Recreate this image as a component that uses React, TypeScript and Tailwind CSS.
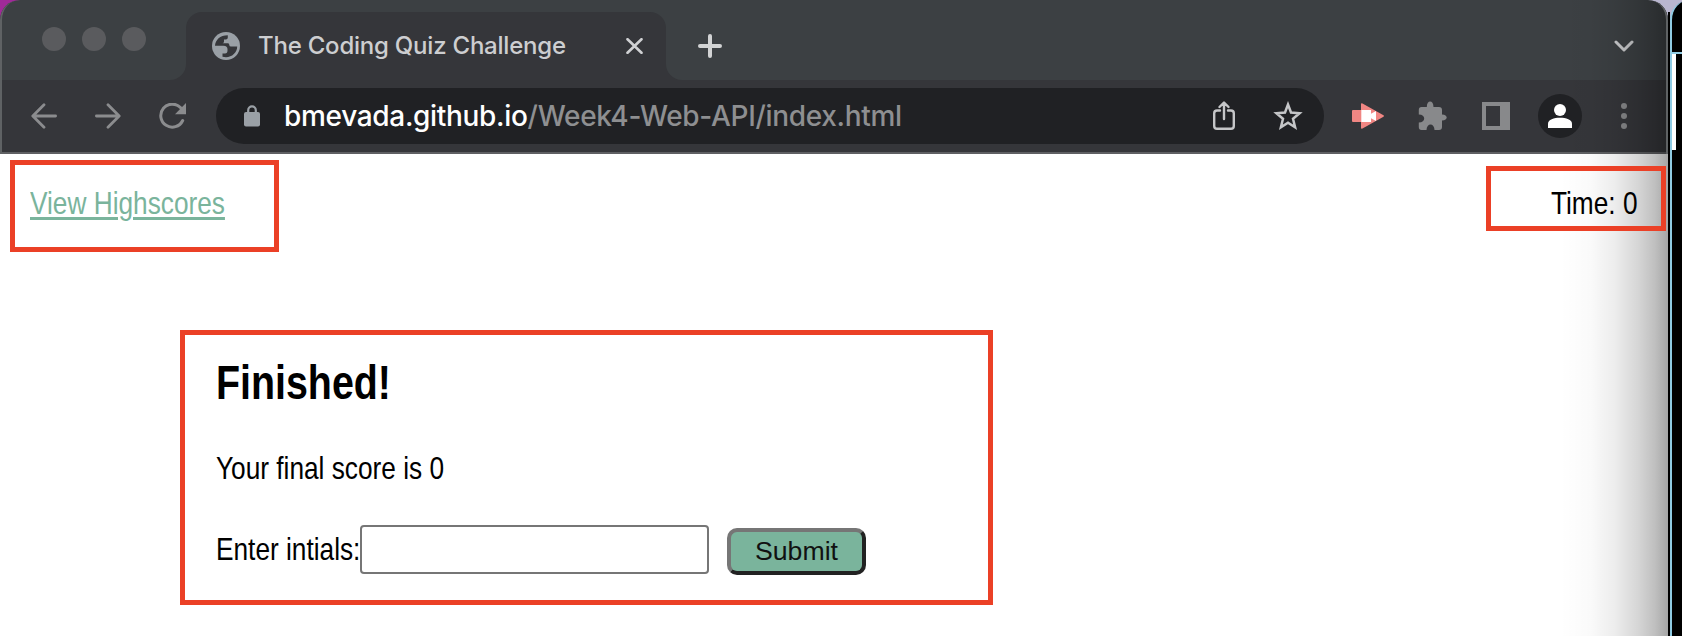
import type { ReactNode } from "react";

function Tick({ children, className = "" }: { children: ReactNode; className?: string }) {
  return <span className={"block shrink-0 whitespace-nowrap " + className}>{children}</span>;
}

function Corner({ flip = false }: { flip?: boolean }) {
  return (
    <svg className="block h-4 w-4 shrink-0 self-end" viewBox="0 0 16 16">
      <path d={flip ? "M0 0A16 16 0 0 0 16 16H0Z" : "M16 0A16 16 0 0 1 0 16H16Z"} fill="#35363a" />
    </svg>
  );
}

function TabStrip() {
  return (
    <div className="flex h-20 bg-[#3c4043] pl-0.5">
      <div className="flex w-[168px] shrink-0 gap-4 pt-[27px] pl-[40px]">
        <i className="h-6 w-6 rounded-full bg-[#5a5b5e]" />
        <i className="h-6 w-6 rounded-full bg-[#5a5b5e]" />
        <i className="h-6 w-6 rounded-full bg-[#5a5b5e]" />
      </div>
      <Corner />
      <div className="mt-3 flex h-[68px] w-[480px] shrink-0 items-start rounded-t-[16px] bg-[#35363a]">
        <svg className="mt-5 ml-[26px] h-7 w-7 shrink-0" viewBox="0 0 28 28">
          <circle cx="14" cy="14" r="14" fill="#9aa0a6" />
          <path
            d="M3 13.800C3.300 8 8 3.300 15.800 3.300V5.500Q15.800 7.500 13.800 7.500H12V9.500Q12 11 10.500 11.300H16Q17.300 11.300 17.300 13Q17.300 14.500 19 14.500H25.200C25.200 20.500 20 25.200 14 25.200L10.500 24.700V21.500H13Q15.500 21.500 15.500 18.500V17.300Q15.500 14 11.500 13.800Z"
            fill="#35363a"
          />
        </svg>
        <Tick className="mt-[18px] ml-[18px] w-[310px] font-[Inter,sans-serif] text-[24px] leading-[32px] font-[450] tracking-[-0.22px] text-[#cdced0]">
          The Coding Quiz Challenge
        </Tick>
        <svg className="mt-[26px] ml-[58px] h-4 w-[17px] shrink-0" viewBox="0 0 17 16" fill="none" stroke="#d0d1d3" strokeWidth="2.6" strokeLinecap="round">
          <path d="M1.500 1.200L15.500 14.800M15.500 1.200L1.500 14.800" />
        </svg>
      </div>
      <Corner flip />
      <svg className="mt-[34px] ml-4 h-6 w-6 shrink-0" viewBox="0 0 24 24" fill="none" stroke="#d2d3d4" strokeWidth="4" strokeLinecap="round">
        <path d="M12 2V22M2 12H22" />
      </svg>
      <svg className="mt-[40px] mr-[34px] ml-auto h-3 w-[20px]" viewBox="0 0 20 12" fill="none" stroke="#cbccce" strokeWidth="3" strokeLinecap="round" strokeLinejoin="round">
        <path d="M2 2L10 10L18 2" />
      </svg>
    </div>
  );
}

function Toolbar() {
  return (
    <div className="flex h-[74px] items-center border-b-2 border-[#5f6063] bg-[#35363a] pl-0.5">
      <svg className="ml-[29px] h-[26px] w-[26px] shrink-0" viewBox="0 0 26 26" fill="none" stroke="#8b8c8e" strokeWidth="2.800" strokeLinecap="round" strokeLinejoin="round">
        <path d="M24.600 13H2M13 1.800L1.800 13L13 24.200" />
      </svg>
      <svg className="ml-[38px] h-[26px] w-[26px] shrink-0" viewBox="0 0 26 26" fill="none" stroke="#8b8c8e" strokeWidth="2.800" strokeLinecap="round" strokeLinejoin="round">
        <path d="M1.400 13H24M13 1.800L24.200 13L13 24.200" />
      </svg>
      <svg className="ml-[38px] h-[26px] w-[27px] shrink-0" viewBox="0 0 27 26">
        <path d="M21.700 4.800A11.500 11.500 0 1 0 23.700 17.500" fill="none" stroke="#8b8c8e" strokeWidth="3" strokeLinecap="round" />
        <path d="M27 0V11.300H16Z" fill="#8b8c8e" />
      </svg>
      <div className="ml-[30px] flex h-14 w-[1108px] shrink-0 items-center rounded-full bg-[#202124]">
        <svg className="ml-[28px] h-[22px] w-4 shrink-0" viewBox="0 0 16 22">
          <path d="M4.200 8V5.200A3.800 3.800 0 0 1 11.800 5.200V8" fill="none" stroke="#9aa0a6" strokeWidth="2.200" />
          <rect y="7" width="16" height="14.500" rx="2" fill="#9aa0a6" />
        </svg>
        <Tick className="ml-[24px] font-[Inter,sans-serif] text-[28px] leading-[36px] font-[450] tracking-[-0.32px] text-[#8e8f91]">
          <span className="text-white">bmevada.github.io</span>/Week4-Web-API/index.html
        </Tick>
        <svg className="ml-auto h-[30px] w-[22px]" viewBox="0 0 22 30" fill="none" stroke="#c5c6c8" strokeWidth="2.400" strokeLinecap="round" strokeLinejoin="round">
          <path d="M7 9.500H4Q1.200 9.500 1.200 12.300V25Q1.200 27.800 4 27.800H18Q20.800 27.800 20.800 25V12.300Q20.800 9.500 18 9.500H15M11 18V2M6.500 6L11 1.500L15.500 6" />
        </svg>
        <svg className="mr-[21px] ml-[38px] h-[30px] w-[30px]" viewBox="0 0 30 30" fill="none" stroke="#c5c6c8" strokeWidth="2.500">
          <path d="M15 3.500L18 11.500L26.600 12.200L20 17.800L22.100 26.300L15 21.700L7.900 26.300L10 17.800L3.400 12.200L12 11.500Z" />
        </svg>
      </div>
      <svg className="ml-[28px] h-[26px] w-8 shrink-0" viewBox="0 0 32 26">
        <rect y="7" width="20" height="12" rx="1" fill="#f08683" />
        <path d="M9 1Q9 0 10.500 .5L31.500 12.300Q32.300 13 31.500 13.700L10.500 25.500Q9 26 9 25Z" fill="#f08683" />
        <path d="M9.300 7H19V10.800L24 8V18L19 15.200V19H9.300Z" fill="#fff" />
      </svg>
      <svg className="ml-[34px] h-[30px] w-[30px] shrink-0" viewBox="0 0 30 30">
        <path
          d="M9 6H8.800C8.800 -1.200 15.500 -1.200 15.500 6H21Q24 6 24 9V13.500C30.300 13.500 30.300 19.500 24 19.500V26Q24 29 21 29H16.500C16.500 21.500 8.500 21.500 8.500 29H3.500Q.8 29 .8 26V21.500C8 21.500 8 13.500 .8 13.500V9Q.8 6 3.500 6Z"
          fill="#88898b"
        />
      </svg>
      <svg className="ml-[34px] h-7 w-7 shrink-0" viewBox="0 0 28 28">
        <path d="M0 0H28V28H0ZM4 4V24H18V4Z" fill="#88898b" fillRule="evenodd" />
      </svg>
      <div className="ml-7 flex h-11 w-11 shrink-0 items-center justify-center rounded-full bg-[#202124]">
        <svg className="h-6 w-6" viewBox="0 0 24 24" fill="#fff">
          <circle cx="12" cy="6" r="6" />
          <path d="M0 24V19.500C0 15.800 6 13.800 12 13.800S24 15.800 24 19.500V24Z" />
        </svg>
      </div>
      <div className="ml-[39px] flex flex-col gap-1">
        <i className="h-1.5 w-1.5 rounded-full bg-[#88898b]" />
        <i className="h-1.5 w-1.5 rounded-full bg-[#88898b]" />
        <i className="h-1.5 w-1.5 rounded-full bg-[#88898b]" />
      </div>
    </div>
  );
}

function Page() {
  return (
    <div className="h-[482px] bg-white font-['Liberation_Sans',Arial,sans-serif] text-[32px] leading-[36px] text-black">
      <div className="flex items-start justify-between pt-1.5 pr-0.5 pl-[10px]">
        <div className="h-[92px] w-[269px] border-5 border-[#eb4026] pt-5 pl-[15px]">
          <a href="#" className="inline-block origin-left scale-x-[0.82] whitespace-nowrap text-[#7ab49c] underline decoration-[3px] underline-offset-[3px]">
            View Highscores
          </a>
        </div>
        <div className="relative z-10 mt-1.5 flex h-[65px] w-[180px] justify-end border-5 border-[#eb4026] pt-[14px] pr-[24px]">
          <Tick className="origin-right scale-x-[0.82]">Time: 0</Tick>
        </div>
      </div>
      <div className="mt-[78px] ml-[180px] h-[275px] w-[813px] border-5 border-[#eb4026] pt-[21px] pl-[31px]">
        <h2 className="origin-left scale-x-[0.82] text-[48px] leading-[54px] font-bold">Finished!</h2>
        <p className="mt-[40px] origin-left scale-x-[0.82]">Your final score is 0</p>
        <div className="mt-[39px] flex">
          <label htmlFor="initials" className="mt-[6px] w-[144px] shrink-0 origin-left scale-x-[0.82] whitespace-nowrap">
            Enter intials:
          </label>
          <input id="initials" className="h-[49px] w-[349px] rounded-[4px] border-2 border-[#767676] bg-white px-2 outline-none" />
          <button className="mt-[3px] ml-[18px] h-[47px] w-[139px] rounded-[10px] border-4 border-t-[#767676] border-r-[#222] border-b-[#222] border-l-[#767676] bg-[#7ab49c] pb-0.5 font-['Liberation_Sans',Arial,sans-serif] text-[26.67px] leading-[30px] text-[#111]">
            Submit
          </button>
        </div>
      </div>
    </div>
  );
}

export default function App() {
  return (
    <div className="flex h-[636px] w-[1682px] overflow-hidden bg-[linear-gradient(90deg,#a02a98_0,#a02a98_100px,#b9b6cf_101px)]">
      <div className="relative h-[636px] w-[1668px] shrink-0 overflow-hidden rounded-t-[20px]">
        <TabStrip />
        <Toolbar />
        <Page />
        <div className="pointer-events-none absolute inset-y-0 right-0 w-[108px] bg-[linear-gradient(90deg,rgba(0,0,0,0)_0%,rgba(0,0,0,0.02)_28%,rgba(0,0,0,0.07)_50%,rgba(0,0,0,0.16)_72%,rgba(0,0,0,0.25)_88%,rgba(0,0,0,0.35)_100%)]" />
        <div className="pointer-events-none absolute inset-x-0 top-0 h-[154px] rounded-t-[20px] border-x-2 border-[#5f6264]" />
      </div>
      <div className="mt-3 w-0.5 shrink-0 bg-black" />
      <div className="h-[660px] w-[60px] shrink-0 rounded-tl-[20px] border-l-2 border-[#8fcbe3] bg-black">
        <div className="h-[54px] border-b-2 border-[#8fcbe3]" />
        <div className="h-24 w-1 bg-white" />
      </div>
    </div>
  );
}
